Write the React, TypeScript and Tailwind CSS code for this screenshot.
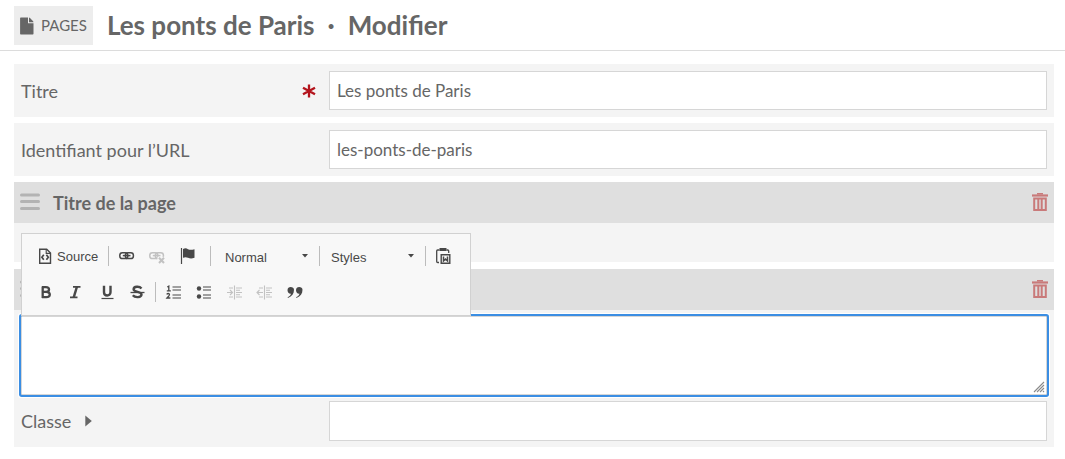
import type { ReactNode } from "react";

function Glyph({ children, label, disabled = false }: { children: ReactNode; label: string; disabled?: boolean }) {
  return (
    <button
      type="button"
      aria-label={label}
      disabled={disabled}
      className="flex h-7 items-center px-[7px] text-[#484848] disabled:opacity-30"
    >
      <svg viewBox="0 0 16 16" className="size-4 overflow-visible" fill="none" stroke="currentColor" strokeWidth="1.5" aria-hidden="true">
        {children}
      </svg>
    </button>
  );
}

function Separator() {
  return <span className="mr-[3px] ml-[5px] h-5 w-px bg-[#bcbcbc]" />;
}

function Combo({ label, value }: { label: string; value: string }) {
  return (
    <span className="grid w-[97px] items-center">
      <select
        aria-label={label}
        defaultValue={value}
        className="col-start-1 row-start-1 h-7 w-full appearance-none bg-transparent px-2 pt-1 text-[13px] text-[#484848] outline-none"
      >
        <option>{value}</option>
      </select>
      <svg viewBox="0 0 6 4" className="pointer-events-none col-start-1 row-start-1 mr-1.5 h-1 w-1.5 justify-self-end fill-[#484848]" aria-hidden="true">
        <path d="M0 0h6L3 3.5z" />
      </svg>
    </span>
  );
}

const chain = (
  <>
    <rect x="0.8" y="4.700" width="8" height="5.800" rx="2.600" strokeWidth="1.500" />
    <rect x="6.400" y="4.700" width="8" height="5.800" rx="2.600" strokeWidth="1.500" />
    <path d="M3.800 7.600h7.700" strokeWidth="1.500" />
  </>
);

function Toolbar() {
  return (
    <div
      role="toolbar"
      aria-label="Mise en forme"
      className="absolute bottom-full left-0 flex w-[450px] flex-col gap-2 border border-[#d1d1d1] bg-[#f8f8f8] px-2 pt-2 pb-[9px] font-['Liberation_Sans',Arial,sans-serif]"
    >
      <div className="flex items-center">
        <button type="button" className="flex h-7 w-[73px] items-center gap-1 pl-[7px] text-[13px] text-[#484848]">
          <svg viewBox="0 0 16 16" className="size-4 shrink-0" fill="none" stroke="currentColor" strokeWidth="1.4" aria-hidden="true">
            <path d="M2.700 1.200h7l3.800 3.800v10.200H2.700z" />
            <path d="M9.200 1.200v4.200h4.300" strokeWidth="1.100" />
            <path d="M6.800 6.800 4.900 9.300l1.900 2.500M9.400 6.800l1.900 2.500-1.900 2.500" strokeWidth="1.700" />
          </svg>
          <span className="pt-0.5">Source</span>
        </button>
        <Separator />
        <Glyph label="Lien">{chain}</Glyph>
        <Glyph label="Supprimer le lien" disabled>
          {chain}
          <path d="M8.500 8.800h8V16h-8z" fill="#f8f8f8" stroke="none" />
          <path d="m10 9.800 5 5.200M15 9.800 10 15" strokeWidth="2" />
        </Glyph>
        <Glyph label="Ancre">
          <path d="M2.500 0v16" strokeWidth="1.200" />
          <path d="M4 1c2-1 3.500-.8 5 .2 1.800.9 3.500.8 6.500.1v8.500c-2.500.9-4.500.9-6.500 0-1.700-.9-3-.9-5 0z" fill="currentColor" stroke="none" />
        </Glyph>
        <span className="mr-1.5 ml-2 h-5 w-px bg-[#bcbcbc]" />
        <Combo label="Format" value="Normal" />
        <Separator />
        <Combo label="Style" value="Styles" />
        <Separator />
        <Glyph label="Coller depuis Word">
          <path d="M3.500 2H1.600Q.7 2 .7 3v10.500q0 1 1 1H3M10.500 2h1.200q1 0 1 1v2" strokeWidth="1.300" />
          <path d="M3.500 0h7v3h-7z" fill="currentColor" stroke="none" />
          <path d="M5.200 6.700h8.600v8.600H5.200z" strokeWidth="1.400" />
          <path d="M7.500 8.500v4.500l2-2 2 2V8.500" strokeWidth="1.500" />
        </Glyph>
      </div>
      <div className="flex items-center">
        <Glyph label="Gras">
          <path d="M5.700 2.500v11.500M5 3.200h3.800c4.300 0 4.300 4.700 0 4.700H6h3.200c4.800 0 4.800 5.300 0 5.300H5" strokeWidth="2.300" />
        </Glyph>
        <Glyph label="Italique">
          <path d="M6 2.800h7.500M3 13.400h7.500" strokeWidth="1.700" />
          <path d="M10 2.500 6.700 13.500" strokeWidth="2.500" />
        </Glyph>
        <Glyph label="Souligné">
          <path d="M7 1.800v6.400c0 4.300 6.500 4.300 6.500 0V1.800" strokeWidth="2.400" />
          <path d="M4.500 14.500h12" strokeWidth="1.200" />
        </Glyph>
        <Glyph label="Barré">
          <path d="M14.500 4.400C12.500 2 6.600 2.100 6.600 5.300c0 3.300 7.900 1.900 7.900 5 0 3.600-6.500 3.600-8.700.9" strokeWidth="2.400" />
          <path d="M3.500 8.500h14" strokeWidth="1.300" />
        </Glyph>
        <Separator />
        <Glyph label="Liste numérotée">
          <path d="M6.500 3.500h8.500M6.500 6.500h8.500M6.500 11.500h8.500M6.500 14.500h8.500" strokeWidth="1" transform="translate(0 -.5)" />
          <path d="m1.300 3 1.500-.8v4.600M.8 6.800h4M.6 10.400q1.500-1.500 2.700-.4c.9 1-.7 2.200-2.300 4h3.400" strokeWidth="1.300" />
        </Glyph>
        <Glyph label="Liste à puces">
          <circle cx="3" cy="4.500" r="2.200" fill="currentColor" stroke="none" />
          <circle cx="3" cy="12.500" r="2.200" fill="currentColor" stroke="none" />
          <path d="M7 3.500h8M7 6.500h8M7 11.500h8M7 14.500h8" strokeWidth="1" transform="translate(0 -.5)" />
        </Glyph>
        <Glyph label="Augmenter le retrait" disabled>
          <path d="M1 8.500h5M4 6 6.500 8.500 4 11M8.500 1.500v14M3 4h4M3 13h4M10 4h6M10 6.200h4M10 8.500h6M10 10.800h4M10 13h6" strokeWidth="1.100" />
        </Glyph>
        <Glyph label="Diminuer le retrait" disabled>
          <path d="M1 8.500h6M3.500 6 1 8.500l2.500 2.500M8.500 1.500v14M3 4h4M3 13h4M10 4h6M10 6.200h4M10 8.500h6M10 10.800h4M10 13h6" strokeWidth="1.100" />
        </Glyph>
        <Glyph label="Citation">
          <path
            d="M8 5.800c0 4-2 6.700-6 8.200l-.4-.8c2-.9 3-2 3.400-3.500C3 10 1.500 8.300 1.500 6.200 1.500 4.200 2.900 3 4.700 3S8 4 8 5.800zM16.500 5.800c0 4-2 6.700-6 8.200l-.4-.8c2-.9 3-2 3.400-3.500-2 .3-3.500-1.400-3.500-3.500 0-2 1.400-3.200 3.200-3.200s3.300 1 3.300 2.800z"
            fill="currentColor"
            stroke="none"
          />
        </Glyph>
      </div>
    </div>
  );
}

function BlockHeader({ title }: { title?: string }) {
  return (
    <div className="flex h-[41px] items-center bg-[#dfdfdf] px-1.5 pb-px">
      <button type="button" aria-label="Déplacer" className="mr-[13px]">
        <svg viewBox="0 0 20 18" className="h-[18px] w-5" fill="none" stroke="#b3b3b3" strokeWidth="3" strokeLinecap="round" aria-hidden="true">
          <path d="M1.500 2h17M1.500 8.500h17M1.500 15.500h17" />
        </svg>
      </button>
      {title && <h2 className="pt-0.5 font-bold">{title}</h2>}
      <button type="button" aria-label="Supprimer" className="ml-auto">
        <svg viewBox="0 0 16 18" className="h-[18px] w-4" fill="none" stroke="#c97a7a" aria-hidden="true">
          <path d="M0 2.500h16" strokeWidth="2.200" />
          <path d="M5 .8h6" strokeWidth="1.600" />
          <path d="M2.200 5.500h11.600V17H2.200z" strokeWidth="2" />
          <path d="M6.300 5v11.500M9.700 5v11.500" strokeWidth="2" />
        </svg>
      </button>
    </div>
  );
}

function Field({ id, label, value, required = false }: { id: string; label: string; value: string; required?: boolean }) {
  return (
    <div className="flex items-center bg-[#f4f4f4] p-[7px]">
      <label htmlFor={id} className="flex w-[308px] shrink-0 items-center justify-between pr-[13px]">
        {label}
        {required && (
          <svg viewBox="0 0 14 14" className="size-3.5" fill="none" stroke="#b3141c" strokeWidth="2.300" aria-hidden="true">
            <path d="M7 .5v13M1 3.700l12 6.600M13 3.700 1 10.300" />
          </svg>
        )}
      </label>
      <input id={id} defaultValue={value} className="h-[39px] min-w-0 flex-1 border border-[#d6d6d6] bg-white px-[7px] text-[17px] outline-none" />
    </div>
  );
}

export default function App() {
  return (
    <div className="bg-white font-[Lato,sans-serif] text-lg text-[#666]">
      <header className="flex items-center border-b border-[#dcdcdc] px-3.5 pt-1.5 pb-[5px]">
        <a href="#pages" className="flex h-[39px] items-center gap-[7px] bg-[#ededed] px-1.5 text-[15px]">
          <svg viewBox="0 0 14 18" className="h-[18px] w-3.5" fill="currentColor" aria-hidden="true">
            <path d="M.8.5h7.200v5.700h5.500v10.600q0 .7-.7.7H.8q-.7 0-.7-.7V1.200Q.1.500.8.500z" />
            <path d="M9 .5q.5.100 1 .600L12.900 4q.5.500.600 1.200H9z" />
          </svg>
          PAGES
        </a>
        <h1 className="ml-3.5 flex pb-0.5 text-[26px] leading-9 font-bold">
          <span>Les ponts de Paris</span>
          <span className="mx-[13px]">·</span>
          <span>Modifier</span>
        </h1>
      </header>
      <main className="mt-[13px] mr-[11px] ml-3.5 flex flex-col gap-1.5">
        <Field id="title" label="Titre" value="Les ponts de Paris" required />
        <Field id="slug" label="Identifiant pour l’URL" value="les-ponts-de-paris" />
        <section>
          <BlockHeader title="Titre de la page" />
          <div className="min-h-[39px] bg-[#f4f4f4]" />
        </section>
        <section className="pt-px">
          <BlockHeader />
          <div className="flex flex-col gap-1.5 bg-[#f4f4f4] px-[7px] py-1.5">
            <div className="relative">
              <textarea
                aria-label="Texte"
                className="block h-[79px] w-full resize-none rounded-[1px] border border-[#d6d6d6] bg-white p-1.5 shadow-[0_0_0_2px_#3b8ee3,0_0_0_3px_#fff] outline-none"
              />
              <svg viewBox="0 0 12 12" className="pointer-events-none absolute right-0.5 bottom-0.5 size-3" fill="none" stroke="#8a8a8a" aria-hidden="true">
                <path d="M1 11 11 1M4 11l7-7M7 11l4-4M10 11l1-1" strokeWidth="1.100" />
              </svg>
              <Toolbar />
            </div>
            <div className="flex items-center">
              <label htmlFor="css-class" className="flex w-[308px] shrink-0 items-center gap-3.5">
                Classe
                <svg viewBox="0 0 7 12" className="h-3 w-[7px]" fill="currentColor" aria-hidden="true">
                  <path d="M.3.500 6.800 6 .3 11.500z" />
                </svg>
              </label>
              <input id="css-class" className="h-10 min-w-0 flex-1 border border-[#d6d6d6] bg-white px-[7px] text-[17px] outline-none" />
            </div>
          </div>
        </section>
      </main>
    </div>
  );
}
